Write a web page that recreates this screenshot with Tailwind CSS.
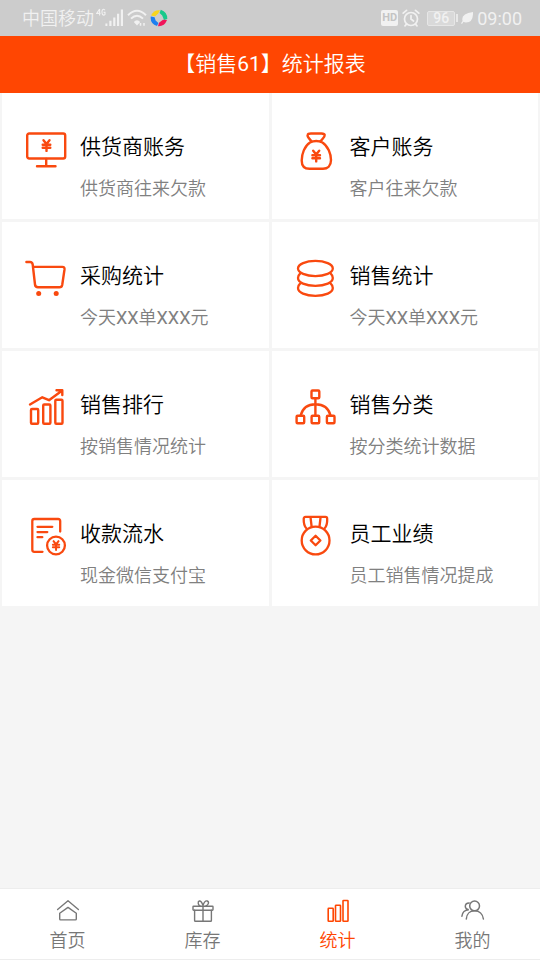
<!DOCTYPE html>
<html lang="zh-CN">
<head>
<meta charset="utf-8">
<meta name="viewport" content="width=device-width, initial-scale=1">
<title>统计报表</title>
<script src="https://cdn.jsdelivr.net/npm/@tailwindcss/browser@4"></script>
</head>
<body class="flex min-h-screen flex-col bg-[#f5f5f5] font-[Roboto,'Noto_Sans_CJK_SC_DemiLight','Noto_Sans_CJK_SC',sans-serif] text-black">

<svg class="hidden" aria-hidden="true">
  <symbol id="yen" viewBox="0 0 10 12" overflow="visible"><path d="M2 .8 5 4.6 8 .8M5 4.6V11.4M1.200 5.2H8.800M1.200 8.2H8.800" fill="none" stroke="currentColor" stroke-width="2.400" stroke-linecap="round"/></symbol>
</svg>

<div class="flex h-9 items-center justify-between bg-[#ccc] pr-[18px] pl-[22px] text-lg text-[#f1f1f1]">
  <div class="flex items-center">
    <span class="pt-0.5">中国移动</span>
    <svg class="ml-0.5 h-5 w-7" viewBox="0 0 28 20" fill="currentColor" aria-label="4G">
      <path d="M3.6 1 .7 5.4H4.5M3.6 1V7.4M9 2.2Q7.8.4 6.5 1.8Q5.4 4 6.5 6.4Q7.6 7.8 9 6.4V4.4H7.6" fill="none" stroke="currentColor" stroke-width="1.1"/>
      <path d="M9.4 15.4h2V18h-2zM13.3 12.8h2.2V18h-2.200zM17.200 9.600h2.200V18h-2.200zM21 5.800h2.200V18H21zM24.800 1.600h2.200V18h-2.200z"/>
    </svg>
    <svg class="ml-[3px] h-5 w-5" viewBox="0 0 20 20" fill="none" stroke="currentColor" stroke-width="2" aria-label="Wi-Fi">
      <path d="M1 7.200Q10-1.600 19 7.200M4 10.600Q10 4.800 16 10.600"/><path d="M6.800 14Q10 10.400 13.200 14L10 17.600Z" fill="currentColor" stroke="none"/><path d="M13.500 15v2.800M17 15v2.800" stroke-width="1.500"/>
    </svg>
    <svg class="ml-[3px] h-[18px] w-[18px]" viewBox="0 0 18 18" aria-hidden="true">
      <path d="M1 6.500Q4 .5 10 1.200L8.200 4.600 5.200 7.200Z" fill="#f7d51d"/>
      <path d="M10.800.8Q17.500 3 17.300 10L14 11 12.200 6.600 9.600 4Z" fill="#17c98b"/>
      <path d="M17 11Q14.500 17.600 8 17.200L9 13.800 13 10.800Z" fill="#f0145a"/>
      <path d="M.8 7.600Q-.2 14.800 7 17L8.400 14 5.600 11.500 4.600 8.200Z" fill="#1b7ff0"/>
    </svg>
  </div>
  <div class="flex items-center">
    <span class="flex h-4 w-[17px] items-center justify-center rounded-xs bg-[#f1f1f1] text-[11px] font-bold text-[#c4c4c4]">HD</span>
    <svg class="ml-1 h-[18px] w-[18px]" viewBox="0 0 18 18" fill="none" stroke="currentColor" stroke-width="1.700" stroke-linecap="round" aria-hidden="true"><circle cx="9" cy="10" r="6.500"/><path d="M9 6.500V10L11.500 12M1.200 4.200 4.500 1.400M13.500 1.400 16.800 4.200M4.500 15.200 3 16.800M13.500 15.200 15 16.800"/></svg>
    <span class="ml-[7px] flex h-[15px] w-7 items-center justify-center rounded-xs border border-[#e6e6e6] bg-[#d9d9d9] text-sm font-medium">96</span>
    <span class="ml-px h-2 w-0.5 bg-[#e8e8e8]"></span>
    <svg class="ml-[3px] h-3 w-3" viewBox="0 0 12 12" fill="currentColor" aria-hidden="true"><path d="M12 0Q12.500 10.500 5 10.500Q3.400 10.500 2.500 9.800L1 12 0 11.300 1.600 9Q-.6 2 12 0Z"/></svg>
    <span class="ml-1 pt-0.5">09:00</span>
  </div>
</div>

<header class="flex h-[57px] items-center justify-center bg-[#ff4602] text-white">
  <h1 class="text-[21px]">【销售61】统计报表</h1>
</header>

<main class="flex-1">
  <div class="grid grid-cols-2 gap-[3px] px-0.5">

    <a href="#supplier" class="flex gap-3.5 bg-white pt-[37px] pr-2 pb-[18px] pl-6">
      <svg class="h-10 w-10 shrink-0 overflow-visible text-[#f9490f]" viewBox="0 0 40 40" fill="none" stroke="currentColor" stroke-width="2.400" stroke-linecap="round" aria-hidden="true"><rect x="1.200" y="3.500" width="38" height="25" rx="2"/><path d="M20.200 29V36M11 36.200H29.500"/><use href="#yen" x="15.500" y="9.500" width="10" height="12"/></svg>
      <div class="pt-0.5"><h2 class="text-[21px] leading-[30px]">供货商账务</h2><p class="mt-[15px] text-lg leading-6 text-[#808080]">供货商往来欠款</p></div>
    </a>

    <a href="#customer" class="flex gap-3.5 bg-white pt-[37px] pr-2 pb-[18px] pl-6">
      <svg class="h-10 w-10 shrink-0 overflow-visible text-[#f9490f]" viewBox="0 0 40 40" fill="none" stroke="currentColor" stroke-width="2.400" stroke-linecap="round" stroke-linejoin="round" aria-hidden="true"><path d="M15.500 11.500C13.500 8.500 11 7 11.600 5C12 3.500 13.500 3.500 15 3.500H25.500C27 3.500 28.500 3.500 28.700 5C29 7 26.500 8.500 24.500 11.500M14 12.500Q20.200 9.500 26.400 12.500C32 16 35 24 35 30C35 36 31.500 38.800 27 38.800H13.500C8.500 38.800 5.700 36 5.700 30.500C5.700 24 8.500 16 14 12.500Z"/><use href="#yen" x="15.200" y="20" width="10" height="12"/></svg>
      <div class="pt-0.5"><h2 class="text-[21px] leading-[30px]">客户账务</h2><p class="mt-[15px] text-lg leading-6 text-[#808080]">客户往来欠款</p></div>
    </a>

    <a href="#purchase" class="flex gap-3.5 bg-white pt-[37px] pr-2 pb-[18px] pl-6">
      <svg class="h-10 w-10 shrink-0 overflow-visible text-[#f9490f]" viewBox="0 0 40 40" fill="none" stroke="currentColor" stroke-width="2.400" stroke-linecap="round" stroke-linejoin="round" aria-hidden="true"><path d="M.4 3H4Q6.300 3 6.700 5.500L9 25.500Q9.300 28.200 12 28.200H33.500Q35.800 28.200 36.200 26L38.500 10.500Q38.800 7.900 36.400 7.900H7.500"/><circle cx="12.700" cy="34.500" r="2.500" fill="currentColor" stroke="none"/><circle cx="30.200" cy="34.500" r="2.500" fill="currentColor" stroke="none"/></svg>
      <div class="pt-0.5"><h2 class="text-[21px] leading-[30px]">采购统计</h2><p class="mt-[15px] text-lg leading-6 text-[#808080]">今天XX单XXX元</p></div>
    </a>

    <a href="#sales" class="flex gap-3.5 bg-white pt-[37px] pr-2 pb-[18px] pl-6">
      <svg class="h-10 w-10 shrink-0 overflow-visible text-[#f9490f]" viewBox="0 0 40 40" fill="none" stroke="currentColor" stroke-width="2.300" stroke-linecap="round" aria-hidden="true"><ellipse cx="19.400" cy="9.500" rx="17.400" ry="7.600"/><path d="M4.500 14.200Q2 16.500 2 19C2 23.500 9.500 26.900 19.400 26.900S36.800 23.500 36.800 19Q36.800 16.500 34.300 14.200M4.500 24.200Q2 26.500 2 29C2 33.500 9.500 36.900 19.400 36.900S36.800 33.500 36.800 29Q36.800 26.500 34.300 24.200"/></svg>
      <div class="pt-0.5"><h2 class="text-[21px] leading-[30px]">销售统计</h2><p class="mt-[15px] text-lg leading-6 text-[#808080]">今天XX单XXX元</p></div>
    </a>

    <a href="#ranking" class="flex gap-3.5 bg-white pt-[37px] pr-2 pb-[18px] pl-6">
      <svg class="h-10 w-10 shrink-0 overflow-visible text-[#f9490f]" viewBox="0 0 40 40" fill="none" stroke="currentColor" stroke-width="2.400" stroke-linecap="round" stroke-linejoin="round" aria-hidden="true"><rect x="5" y="21" width="7.200" height="14.700" rx="1"/><rect x="17.200" y="16.500" width="7.200" height="19.200" rx="1"/><rect x="29.300" y="11.800" width="7.200" height="23.900" rx="1"/><path d="M4 16.500 16.300 9.300 23 12.200 35.500 3M30.500 2.300H36.300V7"/></svg>
      <div class="pt-0.5"><h2 class="text-[21px] leading-[30px]">销售排行</h2><p class="mt-[15px] text-lg leading-6 text-[#808080]">按销售情况统计</p></div>
    </a>

    <a href="#category" class="flex gap-3.5 bg-white pt-[37px] pr-2 pb-[18px] pl-6">
      <svg class="h-10 w-10 shrink-0 overflow-visible text-[#f9490f]" viewBox="0 0 40 40" fill="none" stroke="currentColor" stroke-width="2.400" aria-hidden="true"><rect x="15.500" y="2.500" width="7.800" height="7.800" rx="1"/><rect x=".6" y="27.700" width="7.600" height="7.600" rx="1"/><rect x="15.600" y="27.700" width="7.600" height="7.600" rx="1"/><rect x="30.900" y="27.700" width="7.600" height="7.600" rx="1"/><path d="M19.400 10.500V27.500M4.600 27.500C6.500 20.500 11.500 16.200 19.500 16.200S32.700 20.500 34.600 27.500"/></svg>
      <div class="pt-0.5"><h2 class="text-[21px] leading-[30px]">销售分类</h2><p class="mt-[15px] text-lg leading-6 text-[#808080]">按分类统计数据</p></div>
    </a>

    <a href="#receipts" class="flex gap-3.5 bg-white pt-[37px] pr-2 pb-[18px] pl-6">
      <svg class="h-10 w-10 shrink-0 overflow-visible text-[#f9490f]" viewBox="0 0 40 40" fill="none" stroke="currentColor" stroke-width="2.300" stroke-linecap="round" stroke-linejoin="round" aria-hidden="true"><path d="M34.200 14.500V4Q34.200 2 32.200 2H8.300Q6.300 2 6.300 4V32.800Q6.300 34.800 8.300 34.800H16.500M11.500 9.800H26.300M11.500 15.100H21.300M11.500 20.200H16.300"/><circle cx="30" cy="28.500" r="8.900"/><use href="#yen" x="25.800" y="23.500" width="8.500" height="10"/></svg>
      <div class="pt-0.5"><h2 class="text-[21px] leading-[30px]">收款流水</h2><p class="mt-[15px] text-lg leading-6 text-[#808080]">现金微信支付宝</p></div>
    </a>

    <a href="#staff" class="flex gap-3.5 bg-white pt-[37px] pr-2 pb-[18px] pl-6">
      <svg class="h-10 w-10 shrink-0 overflow-visible text-[#f9490f]" viewBox="0 0 40 40" fill="none" stroke="currentColor" stroke-width="2.300" stroke-linecap="round" stroke-linejoin="round" aria-hidden="true"><circle cx="19.600" cy="23.500" r="13.900"/><path d="M10.500 11.500C8.500 9.500 7.600 6 7.700 2Q7.700-.1 9.500-.1H29.500Q31.200-.1 31.200 2C31.300 6 30.500 9.500 28.500 11.500M14.500 0 15.600 9.500M24.600 0 23.500 9.500M19.600 18.700 24.400 23.500 19.600 28.300 14.800 23.500Z"/></svg>
      <div class="pt-0.5"><h2 class="text-[21px] leading-[30px]">员工业绩</h2><p class="mt-[15px] text-lg leading-6 text-[#808080]">员工销售情况提成</p></div>
    </a>
  </div>
</main>

<nav class="sticky bottom-0 grid grid-cols-4 border-y border-[#ededed] bg-white pt-2.5 pb-1 text-lg leading-7 text-[#777]">
  <a href="#home" class="flex flex-col items-center gap-1">
    <svg class="h-6 w-6" viewBox="0 0 24 24" fill="none" stroke="currentColor" stroke-width="1.400" stroke-linecap="round" stroke-linejoin="round" aria-hidden="true"><path d="M1.600 10.500 12 1.800 22.400 10.500M3.700 20V14.300L12 8.400 20.300 14.300V20Q20.300 20.900 19.400 20.900H4.600Q3.700 20.900 3.700 20Z"/></svg>
    <span>首页</span>
  </a>
  <a href="#stock" class="flex flex-col items-center gap-1">
    <svg class="h-6 w-6" viewBox="0 0 24 24" fill="none" stroke="currentColor" stroke-width="1.400" stroke-linecap="round" stroke-linejoin="round" aria-hidden="true"><rect x="2" y="7.200" width="20" height="4" rx=".6"/><path d="M3.600 11.200V21.400Q3.600 22.200 4.400 22.200H19.600Q20.400 22.200 20.400 21.400V11.200M12 7.200V22.200M12 6.500C11 3.500 9.500 1.800 8.300 2C6.500 2.500 7 6 9 7M12 6.500C13 3.500 14.800 1.600 16.200 2C18.500 2.800 17.500 6 15 7"/></svg>
    <span>库存</span>
  </a>
  <a href="#stats" aria-current="page" class="flex flex-col items-center gap-1 text-[#ff4602]">
    <svg class="h-6 w-6" viewBox="0 0 24 24" fill="none" stroke="currentColor" stroke-width="1.600" aria-hidden="true"><rect x="2.200" y="9.300" width="5" height="13" rx=".6"/><rect x="9.500" y="6.200" width="5" height="16.100" rx=".6"/><rect x="17" y="1.500" width="5" height="20.800" rx=".6"/></svg>
    <span>统计</span>
  </a>
  <a href="#me" class="flex flex-col items-center gap-1">
    <svg class="h-6 w-6" viewBox="0 0 24 24" fill="none" stroke="currentColor" stroke-width="1.500" stroke-linecap="round" aria-hidden="true"><circle cx="13.600" cy="6.900" r="4.900"/><path d="M5.300 20C5.600 15 9 11.800 13.600 11.800S21.800 15 22.400 20M8.200 3.900C5.500 4 4.300 5.700 4.300 7.300C4.300 9 5.500 10.400 7.800 10.700C4 10.800 1.200 13.500.9 17.300"/></svg>
    <span>我的</span>
  </a>
</nav>
</body>
</html>
